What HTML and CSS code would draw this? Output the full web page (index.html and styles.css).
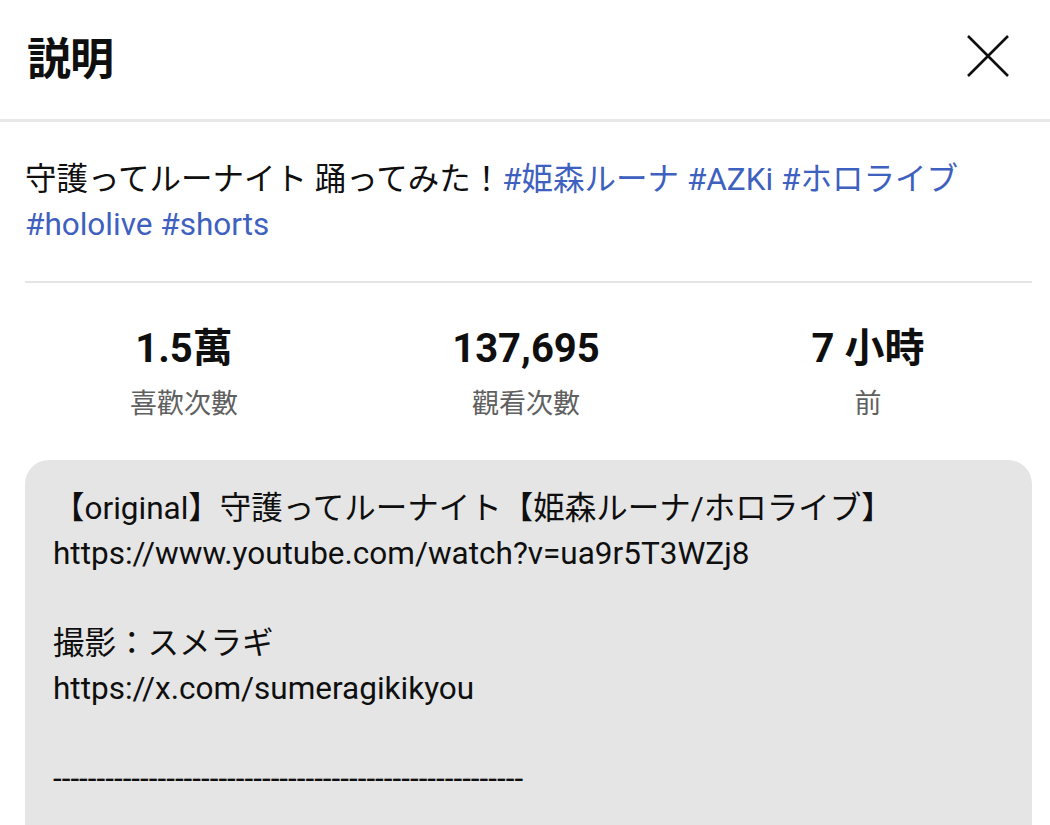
FILE: index.html
```html
<!DOCTYPE html>
<html lang="ja">
<head>
    <meta charset="UTF-8">
    <meta name="viewport" content="width=device-width, initial-scale=1.0">
    <title>説明</title>
    <link rel="stylesheet" href="styles.css">
</head>
<body>
    <div class="panel">
        <header class="panel-header">
            <h1>説明</h1>
            <button class="close-btn" aria-label="閉じる">
                <svg width="44" height="44" viewBox="0 0 44 44">
                    <path d="M2 2 L42 42 M42 2 L2 42" stroke="#0f0f0f" stroke-width="2.6" fill="none"/>
                </svg>
            </button>
        </header>

        <div class="panel-body">
            <p class="title">守護ってルーナイト 踊ってみた！<a href="#">#姫森ルーナ</a> <a href="#">#AZKi</a> <a href="#">#ホロライブ</a> <a href="#">#hololive</a> <a href="#">#shorts</a></p>

            <div class="stats">
                <div class="stat">
                    <div class="stat-value">1.5萬</div>
                    <div class="stat-label">喜歡次數</div>
                </div>
                <div class="stat">
                    <div class="stat-value">137,695</div>
                    <div class="stat-label">觀看次數</div>
                </div>
                <div class="stat">
                    <div class="stat-value">7 小時</div>
                    <div class="stat-label">前</div>
                </div>
            </div>

            <div class="description">
                <p>【original】守護ってルーナイト【姫森ルーナ/ホロライブ】<br>https://www.youtube.com/watch?v=ua9r5T3WZj8</p>
                <p>撮影：スメラギ<br>https://x.com/sumeragikikyou</p>
                <p>------------------------------------------------------</p>
            </div>
        </div>
    </div>
</body>
</html>
```

FILE: styles.css
```css
body {
    margin: 0;
    background: #ffffff;
    font-family: Roboto, "Noto Sans CJK JP", "Noto Sans CJK TC", sans-serif;
    color: #0f0f0f;
    overflow: hidden;
}

.panel {
    width: 1050px;
}

.panel-header {
    display: flex;
    align-items: center;
    justify-content: space-between;
    height: 122px;
    padding: 0 40px 7px 27px;
    border-bottom: 3px solid #e8e8e8;
    box-sizing: border-box;
}

.panel-header h1 {
    margin: 0;
    font-size: 44px;
    font-weight: 700;
    letter-spacing: -1px;
}

.close-btn {
    border: none;
    background: none;
    padding: 0;
    width: 44px;
    height: 44px;
    cursor: pointer;
}

.panel-body {
    padding: 0 18px 0 25px;
}

.title {
    margin: 0;
    padding: 35px 0 34px;
    font-size: 31.5px;
    line-height: 45px;
    border-bottom: 2px solid #e5e5e5;
}

.title a {
    color: #3e61c0;
    text-decoration: none;
}

.stats {
    display: grid;
    grid-template-columns: repeat(3, 1fr);
    padding: 40px 0 36px;
    margin: 0 -7px 0 -12px;
}

.stat {
    display: flex;
    flex-direction: column;
    align-items: center;
}

.stat-value {
    font-size: 40px;
    font-weight: 700;
    line-height: 52px;
}

.stat-label {
    font-size: 27px;
    line-height: 40px;
    color: #606060;
    margin-top: 9px;
}

.description {
    background: #e5e5e5;
    border-radius: 24px;
    padding: 26px 28px 60px;
    min-height: 400px;
}

.description p {
    margin: 0 0 45px;
    font-size: 31.5px;
    line-height: 45px;
}
```
